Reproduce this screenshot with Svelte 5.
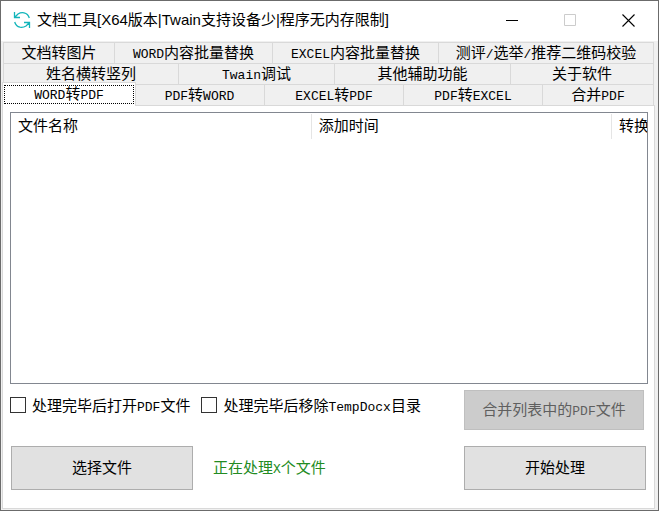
<script>
  const title = '文档工具[X64版本|Twain支持设备少|程序无内存限制]';

  // size is the share of the row that a tab takes
  const tabRows = [
    [
      { label: '文档转图片', size: 111 },
      { label: 'WORD内容批量替换', size: 158 },
      { label: 'EXCEL内容批量替换', size: 166 },
      { label: '测评/选举/推荐二维码校验', size: 215 }
    ],
    [
      { label: '姓名横转竖列', size: 175 },
      { label: 'Twain调试', size: 156 },
      { label: '其他辅助功能', size: 176 },
      { label: '关于软件', size: 143 }
    ],
    [
      { label: 'WORD转PDF', size: 131 },
      { label: 'PDF转WORD', size: 130 },
      { label: 'EXCEL转PDF', size: 139 },
      { label: 'PDF转EXCEL', size: 139 },
      { label: '合并PDF', size: 111 }
    ]
  ];

  let active = $state('WORD转PDF');
  let openAfter = $state(false);
  let removeTemp = $state(false);

  function columns(row) {
    return row.map((tab) => `minmax(0, ${tab.size}fr)`).join(' ');
  }

  // split into latin and chinese runs, the latin ones are set smaller
  function runs(text) {
    return text.match(/[\x20-\x7e]+|[^\x20-\x7e]+/g);
  }
</script>

{#snippet mixed(text)}{#each runs(text) as run}{#if /^[\x20-\x7e]/.test(run)}<span class="latin">{run}</span>{:else}{run}{/if}{/each}{/snippet}

<div class="window">
  <header class="titlebar">
    <svg class="logo" width="18" height="18" viewBox="0 0 18 18" fill="none" stroke="#12b5ba" stroke-width="1.3">
      <path d="M1.500 1v5.500h5.500M1.500 6.500L5 3c2-1.300 4-1.500 6-1.200 2.500.5 4.500 2.400 5.300 5.200" />
      <path d="M16.500 17v-5.500h-5.500M16.500 11.500L13 15c-2 1.300-4 1.500-6 1.200-2.500-.5-4.500-2.400-5.300-5.200" />
    </svg>
    <h1>{title}</h1>
    <div class="controls">
      <button aria-label="最小化">
        <svg width="13" height="13" viewBox="0 0 13 13" stroke="#000"><path d="M0 6.5h12" /></svg>
      </button>
      <button aria-label="最大化" disabled>
        <svg width="13" height="13" viewBox="0 0 13 13" fill="none" stroke="#ccc"><path d="M.5.5h11v11H.5z" /></svg>
      </button>
      <button aria-label="关闭">
        <svg width="13" height="13" viewBox="0 0 13 13" stroke="#000" stroke-width="1.1"><path d="M.5.5l12 12M12.500.5l-12 12" /></svg>
      </button>
    </div>
  </header>

  <main>
    <div class="tabs" role="tablist">
      {#each tabRows as row}
        <div class="tab-row" role="presentation" style="grid-template-columns: {columns(row)}">
          {#each row as tab}
            <button
              class="tab"
              class:active={active === tab.label}
              role="tab"
              aria-selected={active === tab.label}
              onclick={() => (active = tab.label)}
            ><span class="tab-label">{@render mixed(tab.label)}</span></button>
          {/each}
        </div>
      {/each}
    </div>

    <section class="panel">
      <div class="list">
        <table>
          <thead>
            <tr>
              <th class="wide">文件名称</th>
              <th class="wide">添加时间</th>
              <th>转换</th>
            </tr>
          </thead>
          <tbody></tbody>
        </table>
      </div>

      <div class="row">
        <div class="left checks">
          <label><input type="checkbox" bind:checked={openAfter} /><span>{@render mixed('处理完毕后打开PDF文件')}</span></label>
          <label><input type="checkbox" bind:checked={removeTemp} /><span>{@render mixed('处理完毕后移除TempDocx目录')}</span></label>
        </div>
        <button class="btn merge" disabled>{@render mixed('合并列表中的PDF文件')}</button>
      </div>

      <div class="row">
        <div class="left actions">
          <button class="btn">选择文件</button>
          <span class="status">{@render mixed('正在处理X个文件')}</span>
        </div>
        <button class="btn">开始处理</button>
      </div>
    </section>
  </main>
</div>

<style>
  :global(body) {
    margin: 0;
  }

  .window {
    box-sizing: border-box;
    min-height: 100vh;
    display: flex;
    flex-direction: column;
    border: 1px solid #6b6b6b;
    background: #f0f0f0;
    color: #000;
    font: 15px/20px "Noto Sans CJK SC", sans-serif;
  }

  .latin {
    font-family: "Liberation Mono", monospace;
    font-size: 13px;
    line-height: 1;
  }

  button {
    padding: 0;
    border: 0;
    background: none;
    color: inherit;
    font: inherit;
  }

  .titlebar {
    display: flex;
    align-items: center;
    height: 40px;
    padding: 0 1px 0 12px;
    background: #fff;
  }

  .logo {
    flex: none;
    margin-bottom: 2px;
  }

  h1 {
    flex: 1;
    margin: 0 0 2px 6px;
    font: 15px/20px "Liberation Sans", "Noto Sans CJK SC", sans-serif;
    white-space: nowrap;
  }

  .controls {
    display: flex;
  }

  .controls button {
    display: flex;
    align-items: center;
    justify-content: center;
    width: 58px;
    height: 38px;
    margin-bottom: 2px;
  }

  main {
    flex: 1;
    display: flex;
    flex-direction: column;
    padding: 1px 2px 1px 1px;
  }

  .tabs {
    padding: 0 2px 0 1px;
  }

  .tab-row {
    display: grid;
    grid-template-rows: 21px;
    border-left: 1px solid #d9d9d9;
  }

  .tab {
    padding-bottom: 2px;
    border: solid #d9d9d9;
    border-width: 1px 1px 0 0;
    line-height: 16px;
    white-space: nowrap;
  }

  .tab.active {
    z-index: 1;
    margin: -2px -1px -1px -2px;
    padding: 2px 1px;
    border-left-width: 1px;
    background: #fff;
  }

  .active .tab-label {
    display: block;
    height: 17px;
    border: 1px dotted #000;
    line-height: 14px;
  }

  .panel {
    flex: 1;
    display: flex;
    flex-direction: column;
    margin-right: 1px;
    padding: 6px 6px 18px 7px;
    border: 1px solid #d9d9d9;
    background: #fff;
  }

  .list {
    flex: 1;
    border: 1px solid #828790;
    overflow: hidden;
  }

  table {
    width: 100%;
    margin-top: 1px;
    table-layout: fixed;
    border-collapse: collapse;
  }

  th {
    box-sizing: border-box;
    height: 25px;
    padding: 0 0 4px 7px;
    font-weight: normal;
    text-align: left;
    white-space: nowrap;
  }

  .wide {
    width: 47.2%;
    border-right: 1px solid #e5e5e5;
  }

  .row {
    display: flex;
    align-items: flex-start;
    justify-content: space-between;
    margin: 6px 2px 0 0;
  }

  .row + .row {
    margin-top: 16px;
  }

  .left {
    display: flex;
  }

  .checks {
    gap: 11px;
    padding-top: 5px;
  }

  label {
    display: flex;
    align-items: center;
    gap: 6px;
    white-space: nowrap;
  }

  input {
    appearance: none;
    box-sizing: border-box;
    width: 16px;
    height: 16px;
    margin: 0;
    border: 1px solid #333;
    background: #fff;
  }

  input:checked {
    background: #333;
    box-shadow: inset 0 0 0 3px #fff;
  }

  .actions {
    align-items: center;
    gap: 20px;
    padding-left: 1px;
  }

  .btn {
    box-sizing: border-box;
    width: 182px;
    height: 44px;
    padding-bottom: 2px;
    border: 1px solid #adadad;
    background: #e1e1e1;
    white-space: nowrap;
  }

  .merge {
    width: 180px;
    height: 40px;
    margin-right: 2px;
    border-color: #bfbfbf;
    background: #ccc;
    color: #5f5f5f;
  }

  .status {
    padding-bottom: 2px;
    color: #228b22;
  }
</style>
